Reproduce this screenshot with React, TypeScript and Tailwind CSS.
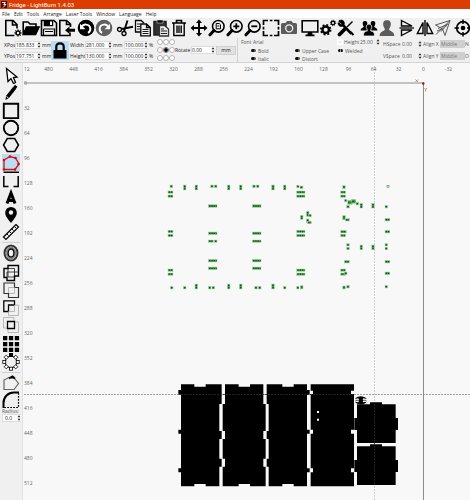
import React from "react";

type P = { children?: React.ReactNode };

function Icon({ children }: P) {
  return (
    <svg viewBox="0 0 18 18" className="block size-[18px] shrink-0" fill="none" stroke="#000" strokeWidth="1.6">
      {children}
    </svg>
  );
}

type Tool = { name: string; art: React.ReactNode };

const glass = (inner: React.ReactNode) => (
  <>
    <circle cx="10.3" cy="7.3" r="5.8" />
    <path d="M6 11.5 L2 15.8" strokeWidth="3" strokeLinecap="round" />
    {inner}
  </>
);

const person = (x: number, y: number, s: number, c: string) => (
  <path
    transform={`translate(${x} ${y}) scale(${s})`}
    d="M0-7 C3-7 4-5 3.600-2.500 C3.200 0 2 .8 2 2 C2 3.500 7 3.500 7 8 L-7 8 C-7 3.500-2 3.500-2 2 C-2 .8-3.200 0-3.600-2.500 C-4-5-3-7 0-7Z"
    fill={c}
    stroke="none"
  />
);

const gear = (cx: number, cy: number, r: number) => (
  <>
    <circle cx={cx} cy={cy} r={r} strokeWidth={r * 0.75} />
    <circle cx={cx} cy={cy} r={r * 1.5} strokeWidth={r * 0.5} strokeDasharray={`${r * 0.59} ${r * 0.588}`} />
  </>
);

const fileTools: Tool[] = [
  { name: "New", art: <><path d="M10.500 16.500H1.800V1.500H9L13 5.500V9.500M8.500 1.500V6H13" /><circle cx="14" cy="14" r="2" /><path d="M14 10.300v1.200M14 16.500v1.200M10.300 14h1.200M16.500 14h1.200M11.400 11.400l.8.8M16 16l.7.7M16.600 11.400l-.8.8" strokeWidth="1" /></> },
  { name: "Open", art: <><path d="M1.200 15.500V3H6L8 5H14V8M1.200 15.500L4.500 8H17L13.500 15.500Z" /><path d="M4.500 8H17L13.500 15.500H1.500Z" fill="#000" strokeWidth=".5" /></> },
  { name: "Save", art: <><path d="M1.500 1.500H14L16.500 4V16.500H1.500Z" /><path d="M4 1.500H13V7H4Z" fill="#000" strokeWidth=".5" /><path d="M10 2.500h2v3.500h-2Z" fill="#fff" stroke="none" /><path d="M3.500 10H14.500V16M3.500 16V10M5 12.500H13" strokeWidth="1.200" /></> },
  { name: "Import", art: <><path d="M12 13.500V16.500H1.800V1.500H8.500L12.500 5V8M8.500 1.500V5.500H12.500" /><path d="M7 11.200 L11.500 7.500V9.800H17V12.700H11.500V15Z" fill="#000" stroke="none" /></> },
];

const historyTools: Tool[] = [
  { name: "Undo", art: <><circle cx="9" cy="9" r="8.300" fill="#000" stroke="none" /><path d="M4.500 8.500C6 4.500 12.500 4.500 13.300 9.500C13.500 11.500 12.500 13 11 13.800" stroke="#fff" strokeWidth="2" /><path d="M3 4.800V10.300H8.500Z" fill="#fff" stroke="none" /></> },
  { name: "Redo", art: <><circle cx="9" cy="9" r="8.300" fill="#606060" stroke="none" /><path d="M13.500 8.500C12 4.500 5.500 4.500 4.700 9.500C4.500 11.500 5.500 13 7 13.800" stroke="#fff" strokeWidth="2" /><path d="M15 4.800V10.300H9.500Z" fill="#fff" stroke="none" /></> },
];

const editTools: Tool[] = [
  { name: "Cut", art: <><circle cx="3.500" cy="10.500" r="2" strokeWidth="1.300" /><circle cx="8" cy="14.500" r="2" strokeWidth="1.300" /><path d="M5.500 10L17 7.800M8 12.500L11.500 1.500" strokeWidth="1.900" /></> },
  { name: "Copy", art: <><path d="M6.500 13H1.500V1.500H7L10 4" strokeWidth="1.300" /><path d="M6.800 5H12.500L16.300 8.500V16.800H6.800ZM12.500 5V8.500H16.300" strokeWidth="1.300" /><path d="M3 5h3M3 7.500h3M3 10h3M8.500 10.500h6M8.500 12.500h6M8.500 14.500h6" strokeWidth=".9" /></> },
  { name: "Paste", art: <><path d="M2 2.500H14V16H2Z" fill="#333" stroke="#222" /><path d="M5 1h6v3H5Z" fill="#000" stroke="#eee" strokeWidth=".5" /><path d="M7.500 6.500H12.500L16.500 10V17H7.500Z" fill="#eee" stroke="#333" strokeWidth="1.300" /><path d="M9 10h3M9 12h6M9 14.500h6" strokeWidth=".9" /></> },
  { name: "Delete", art: <><path d="M2 4H16M6.500 4V1.500H11.500V4" /><path d="M3.800 4V16.500H14.200V4M7 6.500V14M9 6.500V14M11.200 6.500V14" strokeWidth="1.400" /></> },
];

const viewTools: Tool[] = [
  { name: "Pan", art: <><path d="M9 3V15M3 9H15" strokeWidth="2" /><path d="M9 .5L12 4H6ZM9 17.500L12 14H6ZM.5 9L4 6V12ZM17.500 9L14 6V12Z" fill="#000" stroke="none" /></> },
  { name: "Zoom to page", art: glass(<path d="M8.200 4.500h3l1.300 1.300v4H8.200ZM9.300 7h2" strokeWidth="1" />) },
  { name: "Zoom in", art: glass(<path d="M10.300 4.300V10.300M7.300 7.300H13.300" strokeWidth="1.800" />) },
  { name: "Zoom out", art: glass(<path d="M7.300 7.300H13.300" strokeWidth="1.800" />) },
  { name: "Frame selection", art: <path d="M1.500 6V1.500H6M12 1.500H16.500V6M16.500 12V16.500H12M6 16.500H1.500V12M7.800 1.500h2.600M7.800 16.500h2.600M1.500 7.800v2.600M16.500 7.800v2.600" strokeWidth="1.700" /> },
  { name: "Camera", art: <><path d="M1 5.500Q1 4 2.500 4H5.500L7 2H11.500L13 4H15.500Q17 4 17 5.500V14Q17 15 16 15H2Q1 15 1 14Z" fill="#5c5c5c" stroke="none" /><circle cx="9.200" cy="9.300" r="3.500" stroke="#eee" strokeWidth="1.300" /></> },
];

const systemTools: Tool[] = [
  { name: "Preview", art: <><path d="M1.200 1.800H16.800V13H1.200Z" /><path d="M7 13h4l.7 3.200H6.300ZM4.500 15.500h9v1.700h-9Z" fill="#000" stroke="none" /></> },
  { name: "Settings", art: <>{gear(6.7, 10.8, 3.3)}{gear(14, 4, 1.8)}</> },
  { name: "Device settings", art: <><path d="M5 5L14.500 14.800" strokeWidth="2.600" /><path d="M2 1.500L6.500 5.500M1.500 3.500Q2 7 5.500 6.800M3.500 1.500Q7 2 6.800 5.500M13 12.500L16.500 16" strokeWidth="2" /><path d="M15.500 2.500L10 8" strokeWidth="1.500" /><path d="M8 10L2.500 15.500" strokeWidth="3.700" strokeLinecap="round" /></> },
];

const groupTools: Tool[] = [
  { name: "Group", art: <>{person(5, 6.5, 0.63, "#000")}{person(13, 6.5, 0.63, "#000")}<path d="M9 5a3 3 0 0 1 2 5l-.3 2C14 12.500 14.500 14 14.500 17H3.500C3.500 14 4 12.500 7.300 12L7 10A3 3 0 0 1 9 5Z" fill="#000" stroke="#eee" strokeWidth=".8" /></> },
  { name: "Ungroup", art: person(9, 8.5, 1.05, "#5c5c5c") },
];

const flipTools: Tool[] = [
  { name: "Flip vertically", art: <><path d="M3.500 1.500L14 7H3.500ZM3.500 16.500L14 11H3.500Z" strokeWidth="1.400" /><path d="M1.500 9h14.500" strokeWidth="1.300" /></> },
  { name: "Flip horizontally", art: <><path d="M1.300 14.500L7 3.500V14.500ZM16.700 14.500L11 3.500V14.500Z" strokeWidth="1.400" /><path d="M9 1v16" strokeWidth="1.400" /></> },
  { name: "Mirror", art: <path d="M1.500 6L16 1.500L11 16.500L8.500 10ZM2 15.500L16 1.500M4 9.500L14 5M7 12.500L13 6M3 12L8 10" stroke="#555" strokeWidth="1" /> },
];

const targetTools: Tool[] = [
  { name: "Position laser", art: <><circle cx="9" cy="9" r="6.300" strokeWidth="1.700" /><circle cx="9" cy="9" r="2.300" fill="#000" stroke="none" /><path d="M9 .5V5M9 13V17.500M.5 9H5M13 9H17.500" strokeWidth="1.500" /></> },
];

function ToolGroup({ label, tools, className }: { label: string; tools: Tool[]; className: string }) {
  return (
    <div role="group" aria-label={label} className={`flex shrink-0 ${className}`}>
      {tools.map((t) => (
        <button key={t.name} type="button" aria-label={t.name}>
          <Icon>{t.art}</Icon>
        </button>
      ))}
    </div>
  );
}

const drawTools: Tool[] = [
  { name: "Select", art: <path d="M4.500 1.500L6 14.500L9 11.500L11.500 16.500L13.500 15.500L11.500 10.500L15 10Z" fill="#fff" strokeWidth="1.300" /> },
  { name: "Draw lines", art: <><path d="M4 12L11 3L14 5L7 14L3.500 16Z" fill="#000" stroke="none" /><path d="M12 2L14.500 4" strokeWidth="3" /><path d="M4.500 12.500L6.500 14" stroke="#fff" strokeWidth="1" /></> },
  { name: "Rectangle", art: <path d="M1.800 1.800H16.200V16.200H1.800Z" strokeWidth="1.900" /> },
  { name: "Ellipse", art: <circle cx="9" cy="9" r="7.200" strokeWidth="1.900" /> },
  { name: "Polygon", art: <path d="M5.300 2.500H12.700L16.500 9L12.700 15.500H5.300L1.500 9Z" strokeWidth="1.500" /> },
  { name: "Edit nodes", art: <><path d="M2 6L8 2.500L13.500 4L17 10L13 15.500H2Z" stroke="#c81818" strokeWidth="1.300" /><path d="M2 6h0M8 2.500h0M13.500 4h0M16.500 10h0M13 15.500h0M2 15.500h0" stroke="#e00" strokeWidth="2.500" strokeLinecap="round" /></> },
  { name: "Edit tabs", art: <path d="M6.500 15.500H1.800V5M11.500 15.500H16.200V5M1.500 1.200H17" strokeWidth="1.500" /> },
  { name: "Text", art: <path d="M5 14.500L9 4L13 14.500M6.500 11.500H11.500" strokeWidth="3" /> },
  { name: "Marker", art: <><path d="M9 17C5 12 3.200 9.500 3.200 6.700A5.800 5.800 0 0 1 14.800 6.700C14.800 9.500 13 12 9 17Z" fill="#000" stroke="none" /><circle cx="9" cy="6.500" r="2.200" fill="#f0f0f0" stroke="none" /></> },
  { name: "Measure", art: <><path d="M1.500 14L14 1.500L16.500 4L4 16.500Z" strokeWidth="1.200" /><path d="M5 11l1.500 1.500M7.500 8.500L9 10M10 6l1.500 1.500M12.500 3.500L14 5" strokeWidth="1" /></> },
];

const booleanTools: Tool[] = [
  { name: "Union", art: <><path d="M2 4.500H6V1.500H16.500V12H12.500V16.500H5V13.500H2Z" strokeWidth="1.400" /><path d="M6 4.500H12.500V12M6 4.500V13H12.500M9 8h7M5 13V8h4" strokeWidth=".7" /></> },
  { name: "Weld", art: <><path d="M2 2H12.500V6.500H16.500V16.500H6.500V12.500H2Z" stroke="#333" strokeWidth="1.200" /><path d="M6.500 12V6.500H12.500V12.500H7" stroke="#aaa" strokeWidth=".8" /></> },
  { name: "Subtract", art: <><path d="M1.800 1.800H12.500V6H6.500V12.500H1.800Z" strokeWidth="1.300" /><path d="M12.500 6H16.500V16.500H6.500V12.500H12.500Z" stroke="#aaa" strokeWidth=".8" /></> },
  { name: "Intersect", art: <><path d="M1.500 1.500H12V6M6 12H1.500V1.500M12.500 6H16.500V16.500H6V12" stroke="#aaa" strokeWidth=".8" /><path d="M5.500 5.500H12.500V12.500H5.500Z" strokeWidth="1.300" /></> },
];

const arrayTools: Tool[] = [
  { name: "Grid array", art: <path d="M1 1h4.300v4.300H1ZM6.900 1h4.300v4.300H6.900ZM12.800 1h4.300v4.300h-4.300ZM1 6.900h4.300v4.300H1ZM6.900 6.900h4.300v4.300H6.900ZM12.800 6.900h4.300v4.300h-4.300ZM1 12.800h4.300v4.300H1ZM6.900 12.800h4.300v4.300H6.900ZM12.800 12.800h4.300v4.300h-4.300Z" fill="#000" stroke="none" /> },
  { name: "Circular array", art: <><circle cx="9" cy="9" r="5.800" strokeWidth="1" />{[45, 90, 135, 180, 225, 270, 315].map((a) => <rect key={a} x="7.500" y=".8" width="3" height="3" fill="#fff" strokeWidth=".8" transform={`rotate(${a} 9 9)`} />)}<rect x="7" y="0" width="4" height="4" fill="#000" stroke="none" /></> },
];

const shapeTools: Tool[] = [
  { name: "Close path", art: <><path d="M7 3.500L2 6V15.500H12L16.500 9.500L13 5" stroke="#666" strokeWidth="1.200" /><path d="M7 4.300L10.500 2.500L13 4.800M9 3.500h3" strokeWidth="1.900" /></> },
  { name: "Radius", art: <><path d="M1.500 17V12C1.500 6 6 1.500 12 1.500H17" strokeWidth="2" /><path d="M16.500 2V16.500H2" strokeWidth="1.200" strokeDasharray="1.800 1.200" /></> },
];

function SideTools({ tools, active }: { tools: Tool[]; active?: string }) {
  return (
    <>
      {tools.map((t) => (
        <button
          key={t.name}
          type="button"
          aria-label={t.name}
          aria-pressed={t.name === active}
          className={`flex min-h-0 w-[18px] flex-1 items-center overflow-hidden ${t.name === active ? "bg-[#bcdcf4]" : ""}`}
        >
          <Icon>{t.art}</Icon>
        </button>
      ))}
    </>
  );
}

function Spin() {
  return (
    <svg viewBox="0 0 4 6" className="h-[6px] w-[4px] shrink-0" fill="#222">
      <path d="M.5 2.200L2 .3L3.500 2.200ZM.5 3.800L2 5.700L3.500 3.800Z" />
    </svg>
  );
}

function Num({ id, value, label, box, plain }: { id: string; value: string; label?: string; box: string; plain?: boolean }) {
  return (
    <span className={`flex h-[8px] shrink-0 items-center ${plain ? "" : "border-y border-l border-[#dcdcdc] bg-white"} ${box}`}>
      <input id={id} aria-label={label} defaultValue={value} className="w-0 min-w-0 flex-1 bg-transparent leading-[6px] outline-none" />
      <Spin />
    </span>
  );
}

function Toggle({ label, on }: { label: string; on?: boolean }) {
  return (
    <label className="flex h-[8px] items-center gap-[2px] text-[#555]">
      <input
        type="checkbox"
        defaultChecked={on}
        className="h-[3px] w-[5px] appearance-none rounded-sm border-l-[3px] border-[#111] bg-[#555] checked:border-l-[2px] checked:border-r-[2px] checked:bg-[#999]"
      />
      {label}
    </label>
  );
}

function Properties() {
  return (
    <form className="flex h-[26px] shrink-0 items-center overflow-hidden border-b border-[#d4d4d4] bg-[#f0f0f0] pl-[4px] pt-px text-[5px] leading-[6px] text-[#222]">
      <div className="grid shrink-0 grid-cols-[11px_26px_10px] items-center gap-y-[3px]">
        <label htmlFor="xpos">XPos</label><Num id="xpos" value="185.833" box="w-[26px]" /><span className="pl-px">mm</span>
        <label htmlFor="ypos">YPos</label><Num id="ypos" value="197.751" box="w-[26px]" /><span className="pl-px">mm</span>
      </div>
      <button type="button" aria-label="Lock aspect ratio" className="flex h-[19px] w-[18px] shrink-0 items-center justify-center bg-[#bcdcf4]">
        <svg viewBox="0 0 14 17" className="h-[17px] w-[14px]">
          <path d="M.5 8H13.500V16.500H.5Z" />
          <path d="M3.300 8.500V4.800C3.300 .2 10.700 .2 10.700 4.800V8.500" fill="none" stroke="#000" strokeWidth="2.200" />
        </svg>
      </button>
      <div className="grid shrink-0 grid-cols-[15px_27px_12px_24px_8px] items-center gap-y-[3px] pl-px">
        <label htmlFor="w">Width</label><Num id="w" value="281.000" box="w-[27px]" /><span className="pl-px">mm</span><Num id="wp" label="Width percent" value="100.000" box="w-[24px]" /><span className="pl-px">%</span>
        <label htmlFor="h">Height</label><Num id="h" value="130.000" box="w-[27px]" /><span className="pl-px">mm</span><Num id="hp" label="Height percent" value="100.000" box="w-[24px]" /><span className="pl-px">%</span>
      </div>
      <fieldset className="ml-px grid shrink-0 grid-cols-3 gap-y-[2px]">
        {["Top left", "Top", "Top right", "Left", "Centre", "Right", "Bottom left", "Bottom", "Bottom right"].map((a) => (
          <input
            key={a}
            type="radio"
            name="anchor"
            aria-label={a}
            defaultChecked={a === "Centre"}
            className="size-[6px] appearance-none rounded-full border border-[#b4b4b4] bg-white checked:border-[#777] checked:bg-black checked:bg-clip-padding"
          />
        ))}
      </fieldset>
      <div className="flex shrink-0 items-center">
        <label htmlFor="rot" className="w-[16px]">Rotate</label>
        <Num id="rot" value="0.00" box="w-[24px]" />
        <button type="button" className="ml-px h-[9px] w-[20px] border border-[#d0d0d0] bg-[#e1e1e1] text-center leading-[6px]">mm</button>
      </div>
      <div className="ml-px h-full w-px shrink-0 bg-[#d0d0d0]" />
      <div className="flex w-[145px] shrink-0 flex-col gap-px pl-[3px] text-[#555]">
        <div className="flex h-[8px] items-center">
          <label htmlFor="font" className="w-[12px]">Font</label>
          <span className="relative flex w-[90px] items-center">
            <select id="font" className="w-full appearance-none bg-transparent leading-[6px] outline-none"><option>Arial</option></select>
            <svg viewBox="0 0 6 6" className="pointer-events-none absolute right-0 size-[6px] bg-white" fill="none" stroke="#888" strokeWidth=".6"><path d="M2 2.500L3 3.500L4 2.500" /></svg>
          </span>
          <label htmlFor="fh" className="w-[17px] pl-px">Height</label>
          <Num id="fh" value="25.00" box="w-[20px]" plain />
        </div>
        <div className="grid grid-cols-[44px_43px_40px] pl-[10px]">
          <Toggle label="Bold" /><Toggle label="Upper Case" /><Toggle label="Welded" on />
          <Toggle label="Italic" /><Toggle label="Distort" />
        </div>
      </div>
      <div className="grid shrink-0 grid-cols-[19px_21px_17px_25px_4px] items-center gap-y-[4px] text-[#555]">
        <label htmlFor="hs">HSpace</label><Num id="hs" value="0.00" box="w-[20px]" plain />
        <label htmlFor="ax">Align X</label>
        <select id="ax" className="h-[8px] appearance-none bg-[#cfcfcf] pl-px leading-[6px] text-[#777]"><option>Middle</option></select>
        <span>N</span>
        <label htmlFor="vs">VSpace</label><Num id="vs" value="0.00" box="w-[20px]" plain />
        <label htmlFor="ay">Align Y</label>
        <select id="ay" className="h-[8px] appearance-none bg-[#cfcfcf] pl-px leading-[6px] text-[#777]"><option>Middle</option></select>
        <span>O</span>
      </div>
    </form>
  );
}

/* Slot outlines, three drawing units to a pixel: x, y, width, height */
const leftSlots = [
  [60,30,8,8],[100,30,8,15],[135,30,8,15],[182,30,8,8],[193,30,8,8],[232,30,8,15],[268,30,8,15],[308,30,8,8],[319,30,8,8],[365,30,8,15],
  [54,48,15,7],[54,60,15,7],[54,166,15,7],[54,178,15,7],[54,282,15,7],[54,294,15,7],
  [175,89,26,8],[307,89,26,8],[175,171,26,8],[307,171,26,8],[175,195,15,7],[193,195,8,7],[307,195,26,7],[175,253,26,8],[307,253,26,8],[175,276,26,8],[307,276,26,8],
  [61,334,8,8],[100,334,8,8],[135,327,8,15],[175,334,8,8],[186,334,8,8],[232,327,8,15],[268,327,8,15],[314,334,8,8],[325,334,8,8],[365,327,8,15],
];
const rightSlots = [
  [40,30,8,15],[80,31,7,7],[90,33,9,8],[80,48,25,7],[80,60,25,7],[212,48,15,7],[212,60,15,7],[218,32,8,9],
  [223,73,7,7],[233,76,14,12],[245,73,12,12],[258,82,8,8],[230,91,8,8],[270,85,8,14],[305,85,8,14],[345,91,8,8],
  [91,121,8,12],[109,109,8,15],[116,118,8,7],[109,132,8,10],[113,139,11,7],[218,122,8,12],[226,131,12,7],[345,130,14,8],
  [80,166,25,7],[80,178,25,7],[212,166,17,8],[212,178,15,7],[345,166,14,8],
  [230,206,8,7],[230,217,8,7],[270,210,8,14],[305,210,8,14],[345,206,8,7],[345,217,8,7],[223,256,15,8],[345,256,14,8],
  [80,282,25,7],[80,294,25,7],[212,282,15,7],[212,294,15,7],[223,291,8,8],[345,291,14,8],
  [40,334,8,8],[80,334,7,8],[91,332,8,10],[218,333,8,9],[230,331,8,8],[345,331,8,8],
];

function Slots({ list }: { list: number[][] }) {
  return (
    <>
      {list.map(([x, y, w, h]) => (
        <g key={`${x}-${y}`}>
          <rect x={x} y={y} width={w} height={h} fill="#43a047" stroke="#b4ccb5" strokeWidth="1.500" />
          <path
            d={w >= h ? `M${x + 2} ${y + h / 2}H${x + w - 1}` : `M${x + w / 2} ${y + 2}V${y + h - 1}`}
            stroke="#0d5512"
            strokeWidth="4"
            strokeDasharray="4 3"
          />
        </g>
      ))}
    </>
  );
}

function Drawing() {
  return (
    <svg viewBox="23 63 447 437" className="absolute left-0 top-0 h-[437px] w-[447px] overflow-visible">
      <path d="M24 83H423.500V520" fill="none" stroke="#8c8c8c" />
      <circle cx="423.300" cy="83.500" r="1.200" fill="#a01010" />
      <g fill="none" stroke="#b06a50" strokeWidth=".7">
        <path d="M415.500 79.500l2.500 2.500M418 79.500l-2.500 2.500M424.500 88l1.200 1.500L427 88M425.700 89.500V91.500" />
      </g>
      <path d="M374.500 66V520" stroke="#bbb" strokeWidth=".7" strokeDasharray="2 1" />
      <path d="M24 394.500H520" stroke="#888" strokeWidth=".8" strokeDasharray="2 1" />
      <g transform="translate(150 175) scale(.33333)"><Slots list={leftSlots} /></g>
      <g transform="translate(270 175) scale(.33333)">
        <Slots list={rightSlots} />
        <rect x="351" y="31" width="6" height="6" fill="#dfeadf" stroke="#5aa05e" strokeWidth="2" />
      </g>
      <g transform="translate(170 370) scale(.33333)" stroke="#fff" strokeWidth="2" paintOrder="stroke">
        <path d="M33 43H73V50H107V43H155V102H148V183H155V207H148V266H155V290H148V349H107V342H73V349H33V307H25V295H33V191H25V179H33V74H25V60H33Z" />
        <path d="M165 43H206V50H240V43H280V102H287V183H280V207H287V266H280V290H287V349H240V342H206V349H158V290H165V266H158V207H165V183H158V102H165Z" />
        <path d="M290 43H337V50H371V43H411V60H419V74H411V179H419V191H411V295H419V307H411V349H371V342H337V349H296V290H290V266H296V207H290V183H296V102H290Z" />
      </g>
      <g transform="translate(300 370) scale(.33333)">
        <path d="M32 43H162V62H153V72H162V179H153V191H162V295H153V307H162V349H32V307H39V295H32V191H39V179H32V72H39V62H32Z" />
        <path d="M51 123h6v6h-6ZM51 146h6v6h-6Z" fill="#fff" />
        <path d="M171 103H210V97H246V103H287V144H294V180H287V219H171V180H163V144H171Z" />
        <path d="M171 229H210V223H246V229H287V270H294V306H287V345H171V306H163V270H171Z" />
        <path d="M165 87C172 76 193 76 200 87L190 85C187 88 187 94 190 97L200 95C193 106 172 106 165 95L175 97C178 94 178 88 175 85Z" />
        <circle cx="183" cy="91" r="5" />
        <path d="M166 91H199" stroke="#000" strokeWidth="2" />
      </g>
      <path d="M181 394.500H353M374.500 404V485" fill="none" stroke="#2c2c2c" strokeWidth=".8" strokeDasharray="2 1" />
    </svg>
  );
}

const columns = ["480", "448", "416", "384", "352", "320", "288", "256", "224", "192", "160", "128", "96", "64", "32", "0", "-32"];
const rows = ["0", "32", "64", "96", "128", "160", "192", "224", "256", "288", "320", "352", "384", "416", "448", "480", "512"];

export default function App() {
  return (
    <div className="flex h-screen flex-col overflow-hidden bg-[#f0f0f0] font-['Open_Sans','Noto_Sans',sans-serif] text-[5px] leading-[6px] text-[#222]">
      <header className="flex h-[9px] shrink-0 items-center gap-[2px] bg-[#dc3c00] pl-px text-white">
        <svg viewBox="0 0 6 7" className="h-[7px] w-[6px]">
          <path d="M0 0H6V7H0Z" fill="#3a1010" />
          <path d="M1 1.500H4.500L2.500 3.500H5L2 6.500" fill="none" stroke="#fff" strokeWidth=".9" />
        </svg>
        <h1 className="font-['Roboto','Open_Sans',sans-serif] text-[6px] leading-[8px]">Fridge - LightBurn 1.4.03</h1>
      </header>
      <nav className="flex h-[9px] shrink-0 items-center gap-[4px] bg-white pl-[2px]">
        {["File", "Edit", "Tools", "Arrange", "Laser Tools", "Window", "Language", "Help"].map((m) => (
          <button key={m} type="button">{m}</button>
        ))}
      </nav>
      <div role="toolbar" aria-label="Main" className="flex h-[19px] shrink-0 items-center overflow-hidden pl-[4px]">
        <ToolGroup label="File" tools={fileTools} className="" />
        <ToolGroup label="History" tools={historyTools} className="ml-px" />
        <ToolGroup label="Edit" tools={editTools} className="ml-[3px]" />
        <ToolGroup label="View" tools={viewTools} className="ml-[2px]" />
        <ToolGroup label="System" tools={systemTools} className="ml-[3px]" />
        <ToolGroup label="Group" tools={groupTools} className="ml-[5px]" />
        <ToolGroup label="Flip" tools={flipTools} className="ml-[2px]" />
        <ToolGroup label="Position" tools={targetTools} className="ml-[2px]" />
      </div>
      <Properties />
      <main className="flex min-h-0 flex-1">
        <aside className="flex w-[23px] shrink-0 flex-col border-r border-[#e2e2e2] pl-[2px] pt-[4px]">
          <div className="flex h-[174px] flex-col">
            <SideTools tools={drawTools} active="Edit nodes" />
          </div>
          <hr className="my-px w-[18px] border-[#d0d0d0]" />
          <button type="button" aria-label="Offset" className="w-[18px]">
            <Icon>
              <ellipse cx="9" cy="9" rx="6.500" ry="7.500" stroke="#333" strokeWidth="2" />
              <ellipse cx="9" cy="9" rx="4.300" ry="5.500" stroke="#888" strokeWidth="2" />
              <ellipse cx="9" cy="9" rx="2.900" ry="4" strokeWidth="1.300" />
            </Icon>
          </button>
          <div className="mt-[2px] flex h-[70px] flex-col">
            <SideTools tools={booleanTools} />
          </div>
          <div className="mt-px flex h-[36px] flex-col">
            <SideTools tools={arrayTools} />
          </div>
          <hr className="mb-px mt-px w-[18px] border-[#d0d0d0]" />
          <div className="flex h-[34px] flex-col">
            <SideTools tools={shapeTools} />
          </div>
          <label htmlFor="radius" className="text-[#555]">Radius:</label>
          <Num id="radius" value="0.0" box="w-[19px] pl-[2px]" />
        </aside>
        <section aria-label="Workspace" className="relative min-w-0 flex-1 overflow-hidden bg-[#f8f8f8] text-[#666]">
          <Drawing />
          <div className="relative flex h-[12px] items-center pb-px">
            <span className="w-[13px] shrink-0 pl-px">12</span>
            {columns.map((c) => (
              <span key={c} className="w-[25px] shrink-0 text-center">{c}</span>
            ))}
          </div>
          <div className="relative flex flex-col pl-px pt-px -mt-[6px]">
            {rows.map((r) => (
              <span key={r} className="flex h-[25px] shrink-0 items-center">{r}</span>
            ))}
          </div>
        </section>
      </main>
    </div>
  );
}
